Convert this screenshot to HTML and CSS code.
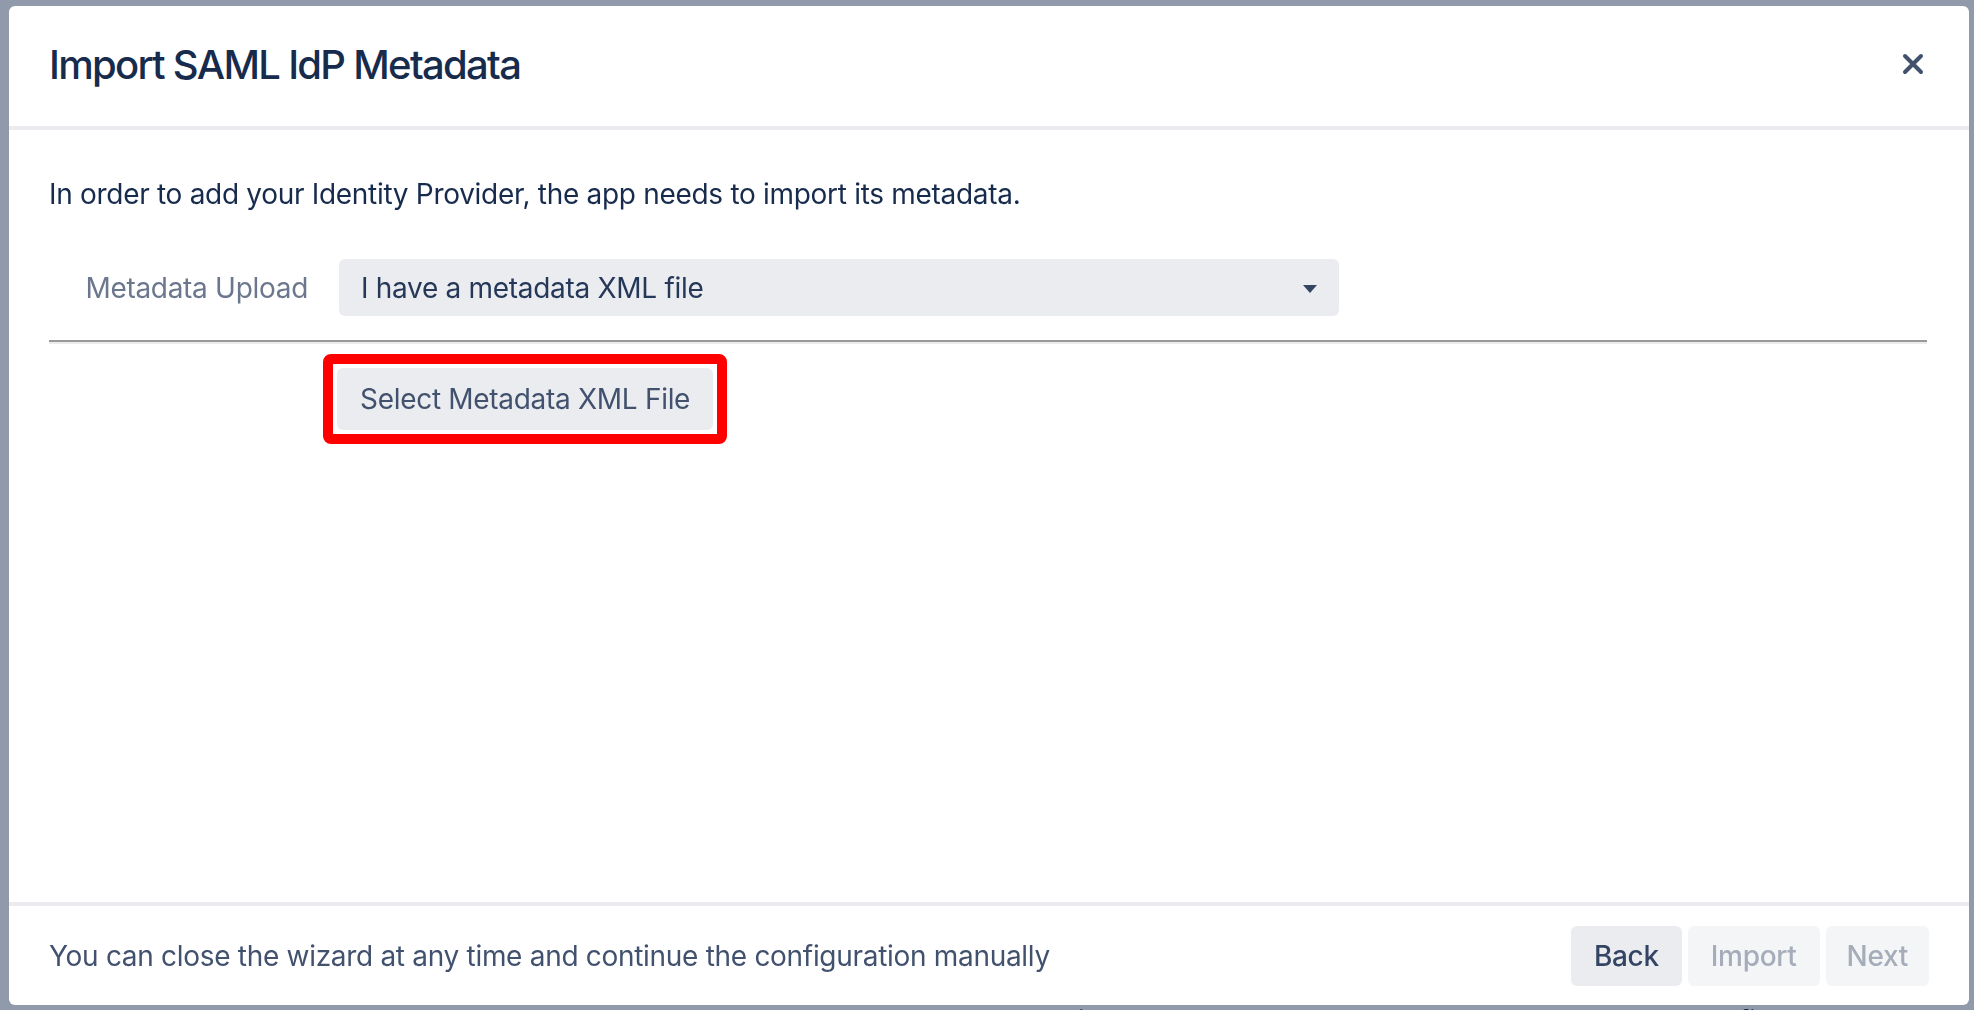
FILE: index.html
```html
<!DOCTYPE html>
<html lang="en">
<head>
  <meta charset="UTF-8" />
  <title>Import SAML IdP Metadata</title>
  <link rel="stylesheet" href="styles.css">
</head>
<body>
  <div class="page">
    <p class="page-hint">Click here to read the IdP metadata and populate the fields below</p>
  </div>

  <div class="blanket"></div>

  <section class="modal" role="dialog" aria-labelledby="modalTitle">
    <header class="modal-header">
      <h4 id="modalTitle">Import SAML IdP Metadata</h4>
      <button class="close-btn" aria-label="Close">
        <svg width="22" height="22" viewBox="0 0 22 22">
          <path d="M3 3 L19 19 M19 3 L3 19" stroke="#42526e" stroke-width="4" stroke-linecap="round" fill="none" />
        </svg>
      </button>
    </header>

    <div class="modal-body">
      <p class="intro">In order to add your Identity Provider, the app needs to import its metadata.</p>

      <div class="field-row">
        <label class="field-label" for="uploadType">Metadata Upload</label>
        <div class="select">
          <span id="uploadType">I have a metadata XML file</span>
          <svg class="caret" width="16" height="8" viewBox="0 0 16 8">
            <path d="M1 0 L15 0 L8 8 Z" fill="#344563" />
          </svg>
        </div>
      </div>

      <hr class="divider" />

      <div class="field-row">
        <span></span>
        <div class="highlight">
          <button class="btn">Select Metadata XML File</button>
        </div>
      </div>
    </div>

    <footer class="modal-footer">
      <span class="footer-note">You can close the wizard at any time and continue the configuration manually</span>
      <div class="actions">
        <button class="btn btn-strong">Back</button>
        <button class="btn btn-strong" disabled>Import</button>
        <button class="btn btn-strong btn-tight" disabled>Next</button>
      </div>
    </footer>
  </section>
</body>
</html>
```

FILE: styles.css
```css
:root {
  --text: #172b4d;
  --text-subtle: #42526e;
  --text-label: #6b778c;
  --text-disabled: #a5adba;
  --fill: #ebecf0;
  --fill-light: #f4f5f7;
  --line: #ebecf0;
  --font: Inter, "Noto Sans", "Liberation Sans", sans-serif;
}

*, *::before, *::after { box-sizing: border-box; }

html, body {
  margin: 0;
  height: 100%;
  overflow: hidden;
}

body {
  font-family: var(--font);
  background: #fff;
  color: var(--text);
  letter-spacing: -0.3px;
}

.page {
  height: 100%;
  padding: 1003px 0 0 1051px;
}

.page-hint {
  margin: 0;
  font-size: 28px;
  line-height: 36px;
  white-space: nowrap;
}

.blanket {
  position: fixed;
  inset: 0;
  background: rgba(9, 30, 66, 0.45);
}

.modal {
  position: fixed;
  top: 6px;
  left: 9px;
  width: 1960px;
  height: 999px;
  background: #fff;
  border-radius: 6px;
  display: flex;
  flex-direction: column;
}

.modal-header {
  height: 124px;
  padding: 0 45px 4px 40px;
  border-bottom: 4px solid var(--line);
  display: flex;
  align-items: center;
  justify-content: space-between;
}

.modal-header h4 {
  margin: 0;
  font-size: 40px;
  font-weight: 500;
  letter-spacing: -1.7px;
  color: var(--text);
}

.close-btn {
  background: none;
  border: none;
  padding: 0;
  width: 22px;
  height: 22px;
  display: flex;
}

.modal-body {
  flex: 1;
  padding: 44px 42px 0 40px;
}

.intro {
  margin: 0 0 45px;
  font-size: 28px;
  line-height: 40px;
}

.field-row {
  display: grid;
  grid-template-columns: 290px 1000px;
  align-items: center;
}

.field-label {
  text-align: right;
  padding-right: 31px;
  font-size: 28px;
  color: var(--text-label);
}

.select {
  height: 57px;
  background: var(--fill);
  border-radius: 6px;
  padding: 0 21px 0 22px;
  display: flex;
  align-items: center;
  justify-content: space-between;
  font-size: 28px;
  color: #253858;
}

.caret { margin-top: 2px; }

.divider {
  margin: 24px 0 10px;
  border: none;
  border-top: 2px solid #9a9a9a;
  border-bottom: 2px solid #ececec;
}

.highlight {
  justify-self: start;
  margin-left: -16px;
  padding: 4px;
  border: 10px solid #ff0000;
  border-radius: 8px;
  display: flex;
}

.btn {
  height: 62px;
  padding: 0 23px;
  border: none;
  border-radius: 6px;
  background: var(--fill);
  font-family: var(--font);
  font-size: 28px;
  letter-spacing: -0.3px;
  color: var(--text-subtle);
}

.btn-strong {
  height: 60px;
  font-weight: 500;
  color: #344563;
}

.btn-strong:disabled {
  background: var(--fill-light);
  color: var(--text-disabled);
}

.btn-tight { padding: 0 21px; }

.modal-footer {
  height: 103px;
  border-top: 4px solid var(--line);
  padding: 0 40px;
  display: flex;
  align-items: center;
  justify-content: space-between;
}

.footer-note {
  font-size: 28px;
  color: var(--text-subtle);
}

.actions {
  display: flex;
  gap: 6px;
}
```
